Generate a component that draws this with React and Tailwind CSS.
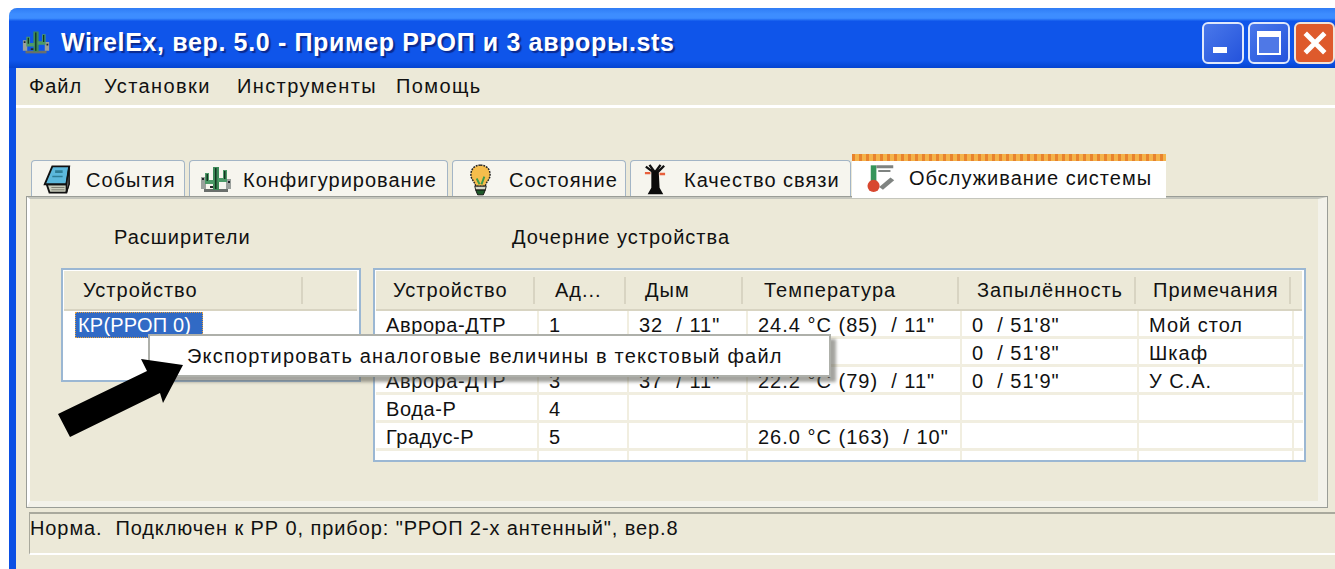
// WirelEx main window, XP-style chrome
const uiFont = "font-['Liberation_Sans',sans-serif]";

const CactusIcon = ({ className }) => (
  <svg viewBox="0 0 32 28" className={className}>
    <path d="M4 24h24v3H4z" fill="#6a6f6c" />
    <path d="M1 12h5v12H1zM26 14h5v10h-5z" fill="#9aa09c" />
    <path d="M13 2h6v23h-6z" fill="#3d8a58" />
    <path d="M5 8h4v7h5v4H5zM27 5h-4v8h-5v4h9z" fill="#4c9a68" />
    <path d="M15 3h1.500v21H15zM6.500 9H8v7H6.500zM24 6h1.500v8H24z" fill="#123520" />
    <path d="M2 13h2v2H2zM28 16h2v2h-2zM10 21h3v2h-3z" fill="#23262a" />
  </svg>
);

const NotebookIcon = () => (
  <svg viewBox="0 0 32 32" className="w-[30px] h-[31px]">
    <path d="M8 30h18l2-9H5z" fill="#c9cdbd" stroke="#111" strokeWidth="2" />
    <path d="M3 21 11 2h18l-3 19z" fill="#5cb8dc" stroke="#111" strokeWidth="2" />
    <path d="M26 21 29 2v19l-3 9z" fill="#5f5f5f" stroke="#111" strokeWidth="1.500" />
    <path d="M14 6h8v3h-8zM11 12h11v1.500H11z" fill="#2f7d96" />
    <path d="M10 24.500h14M10 27h14" stroke="#7a7a6f" />
  </svg>
);

const BulbIcon = () => (
  <svg viewBox="0 0 24 34" className="w-[23px] h-[33px]">
    <path d="M12 2C5 2 2 7 2 12c0 5 4 7 5 12h10c1-5 5-7 5-12 0-5-3-10-10-10z" fill="#f6bd4c" stroke="#222" strokeWidth="1.500" strokeDasharray="2 1" />
    <path d="M8 16l3 6M16 14l-3 8" stroke="#3e9b4d" strokeWidth="2" />
    <path d="M6 24h12l-1 4H7z" fill="#d9d9c8" stroke="#222" />
    <path d="M7 28h10l-2 5H9z" fill="#1f5a2a" stroke="#111" />
  </svg>
);

const TowerIcon = () => (
  <svg viewBox="0 0 24 34" className="w-[22px] h-[33px]">
    <path d="M8 7h8l1 19 4 7H4l4-7z" fill="#0b0b0b" />
    <path d="M2 3l8 6M22 2l-7 7M6 1l5 7M18 1l-5 7" stroke="#111" strokeWidth="2.500" />
    <path d="M1 10h6M17 11h6" stroke="#e8603c" strokeWidth="2.500" />
  </svg>
);

const ThermoIcon = () => (
  <svg viewBox="0 0 32 32" className="w-[30px] h-[31px]">
    <path d="M4 3h6v19H4z" fill="#35955a" />
    <circle cx="7" cy="25" r="6.500" fill="#d8472f" />
    <path d="M10 3h18v3H10zM12 8h13v2H12z" fill="#7f8381" />
    <path d="M13 26l12-10 4 3-12 10z" fill="#7f8381" />
  </svg>
);

const Tab = ({ icon, label, className, gap }) => (
  <div className={`h-[37px] flex items-center bg-[#f6f5ee] border border-b-0 border-[#a3b5c6] rounded-t-[4px] ${className}`}>
    <span className="shrink-0">{icon}</span>
    <span className={`pt-[2px] ${gap}`}>{label}</span>
  </div>
);

const columns = "grid grid-cols-[163px_90px_119px_214px_177px_155px_1fr]";
const heads = [
  ["Устройство", "w-[159px] pl-[17px]"],
  ["Ад...", "w-[91px] pl-[20px]"],
  ["Дым", "w-[117px] pl-[19px]"],
  ["Температура", "w-[216px] pl-[21px]"],
  ["Запылённость", "w-[177px] pl-[18px]"],
  ["Примечания", "w-[155px] pl-[17px]"],
];
const rows = [
  ["Аврора-ДТР", "1", '32  / 11"', '24.4 °C (85)  / 11"', `0  / 51'8"`, "Мой стол"],
  ["", "", "", "", `0  / 51'8"`, "Шкаф"],
  ["Аврора-ДТР", "3", '37  / 11"', '22.2 °C (79)  / 11"', `0  / 51'9"`, "У С.А."],
  ["Вода-Р", "4", "", "", "", ""],
  ["Градус-Р", "5", "", '26.0 °C (163)  / 10"', "", ""],
];

export default function App() {
  return (
    <div className={`relative w-[1335px] h-[569px] overflow-hidden bg-white pl-[9px] pt-[8px] text-[20px] leading-none tracking-[1px] text-[#111] ${uiFont}`}>
      <div className="h-[561px] flex flex-col bg-[#ece9d8] rounded-tl-[8px]">
        {/* title bar */}
        <div className="h-[60px] shrink-0 flex items-center pl-[13px] rounded-tl-[8px] bg-[linear-gradient(#2f7cf5_0,#3d8dff_10%,#3d8dff_17%,#0f55ea_22%,#0f55ea_88%,#0544d0_100%)]">
          <CactusIcon className="w-[28px] h-[28px] mt-[8px]" />
          <span className="ml-[11px] mt-[8px] text-[25px] font-bold tracking-[0.65px] whitespace-pre text-white [text-shadow:2px_2px_1px_#0a2a90]">
            WirelEx, вер. 5.0 - Пример РРОП и 3 авроры.sts
          </span>
          <div className="ml-auto mt-[10px] flex gap-[4px]">
            <div className="w-[42px] h-[42px] pl-[9px] pb-[9px] flex items-end rounded-[6px] border-2 border-[#dfe8fb] bg-[linear-gradient(135deg,#4a78ea,#2453dc)]">
              <div className="w-[14px] h-[6px] bg-white" />
            </div>
            <div className="w-[42px] h-[42px] flex items-center justify-center rounded-[6px] border-2 border-[#dfe8fb] bg-[linear-gradient(135deg,#4a78ea,#2453dc)]">
              <div className="w-[24px] h-[24px] border-2 border-t-[6px] border-white bg-[#4f78e6]" />
            </div>
            <div className="w-[41px] h-[42px] flex items-center justify-center rounded-[6px] border-2 border-[#f1e3d8] bg-[#de5a2c]">
              <svg viewBox="0 0 24 24" className="w-[26px] h-[26px]">
                <path d="M3 3l18 18M21 3 3 21" stroke="#fff" strokeWidth="4.500" />
              </svg>
            </div>
          </div>
        </div>

        <div className="flex-1 flex min-h-0">
          <div className="w-[7px] shrink-0 bg-[#0b4fe4]" />
          <div className="flex-1 flex flex-col min-w-0">
            {/* menu bar */}
            <div className="h-[37px] shrink-0 flex items-center pl-[13px] pb-[1px] tracking-[1.4px]">
              <span className="w-[75px] tracking-[1px]">Файл</span>
              <span className="w-[133px]">Установки</span>
              <span className="w-[159px]">Инструменты</span>
              <span>Помощь</span>
            </div>
            <div className="h-[3px] shrink-0 bg-white" />

            {/* tab strip */}
            <div className="h-[45px] mt-[44px] shrink-0 flex items-end gap-[4px] pl-[15px]">
              <Tab className="w-[154px] pl-[10px]" gap="ml-[14px]" icon={<NotebookIcon />} label="События" />
              <Tab className="w-[259px] pl-[10px]" gap="ml-[11px]" icon={<CactusIcon className="w-[32px] h-[28px]" />} label="Конфигурирование" />
              <Tab className="w-[174px] pl-[16px]" gap="ml-[17px]" icon={<BulbIcon />} label="Состояние" />
              <Tab className="w-[221px] pl-[13px]" gap="ml-[18px]" icon={<TowerIcon />} label="Качество связи" />
              <div className="-ml-[3px] w-[314px] h-[44px] -mb-[1px] relative z-10 flex flex-col bg-white">
                <div className="h-[7px] shrink-0 bg-[repeating-linear-gradient(90deg,#e8832e_0,#e8832e_3px,#f4b34a_3px,#f4b34a_7px)]" />
                <div className="flex-1 flex items-center pl-[15px] pb-[4px]">
                  <ThermoIcon />
                  <span className="ml-[12px]">Обслуживание системы</span>
                </div>
              </div>
            </div>

            {/* tab page */}
            <div className="ml-[11px] mr-[8px] h-[310px] shrink-0 pl-[31px] border-t-2 border-l-[3px] border-r-[9px] border-b-[6px] border-t-[#c5c6bd] border-l-white border-r-[#f3f2ea] border-b-[#f3f2ea] outline outline-[#9a9d97]">
              <div className="flex h-[69px] items-center pt-[7px]">
                <span className="w-[451px] pl-[53px]">Расширители</span>
                <span>Дочерние устройства</span>
              </div>
              <div className="flex items-start gap-[12px]">
                {/* expanders list */}
                <div className="w-[300px] h-[114px] shrink-0 border-2 border-[#9bb7d3] p-[1px] bg-white">
                  <div className="h-[40px] flex items-center bg-[#ece9d8] border-b-2 border-[#d8d4c2] mr-[1px]">
                    <span className="w-[239px] h-[27px] flex items-center pl-[19px] border-r-2 border-[#d8d4c2]">Устройство</span>
                  </div>
                  <div className="ml-[11px] mt-[1px] w-[128px] h-[26px] flex items-center pl-[2px] whitespace-pre tracking-[0.2px] bg-[#316ac5] text-white border border-dotted border-[#e8a33d]">
                    КР(РРОП 0)
                  </div>
                </div>

                {/* child devices table */}
                <div className="w-[933px] h-[194px] shrink-0 border-2 border-[#9bb7d3] p-[1px] bg-white overflow-hidden">
                  <div className="h-[40px] flex items-center bg-[#ece9d8] border-b-2 border-[#d8d4c2] mr-[1px]">
                    {heads.map(([title, size]) => (
                      <span key={title} className={`${size} h-[27px] flex items-center border-r-2 border-[#d8d4c2] whitespace-pre`}>
                        {title}
                      </span>
                    ))}
                  </div>
                  {rows.map((row, i) => (
                    <div key={i} className={`${columns} h-[28px] border-b-[3px] border-[#f1eee0]`}>
                      {row.map((cell, j) => (
                        <span key={j} className={`flex items-center pl-[10px] pt-[3px] whitespace-pre border-r-2 border-[#f1eee0] ${j === 0 ? "tracking-[0.6px]" : ""}`}>
                          {cell}
                        </span>
                      ))}
                      <span />
                    </div>
                  ))}
                  <div className={`${columns} h-[10px]`}>
                    {heads.map(([title]) => (
                      <span key={title} className="border-r-2 border-[#f1eee0]" />
                    ))}
                  </div>
                </div>
              </div>
            </div>

            {/* status bar */}
            <div className="ml-[13px] mt-[5px] h-[43px] shrink-0 pt-[4px] whitespace-pre tracking-[0.9px] border-t-2 border-l border-b-2 border-t-[#a9a99d] border-l-[#a9a99d] border-b-white">
              Норма.  Подключен к РР 0, прибор: "РРОП 2-х антенный", вер.8
            </div>
          </div>
        </div>
      </div>

      {/* context menu */}
      <div className="absolute left-[148px] top-[334px] w-[683px] h-[43px] z-20 flex items-center pl-[37px] tracking-[1.2px] bg-white border-2 border-[#aeb0aa] shadow-[5px_5px_3px_rgba(90,90,80,0.55)]">
        Экспортировать аналоговые величины в текстовый файл
      </div>

      {/* callout arrow */}
      <svg viewBox="0 0 1335 569" className="absolute inset-0 z-30 w-[1335px] h-[569px] pointer-events-none">
        <path d="M58 414 147 371 141 359 183 365 163 403 160 393 70 437z" fill="#000" />
      </svg>
    </div>
  );
}
